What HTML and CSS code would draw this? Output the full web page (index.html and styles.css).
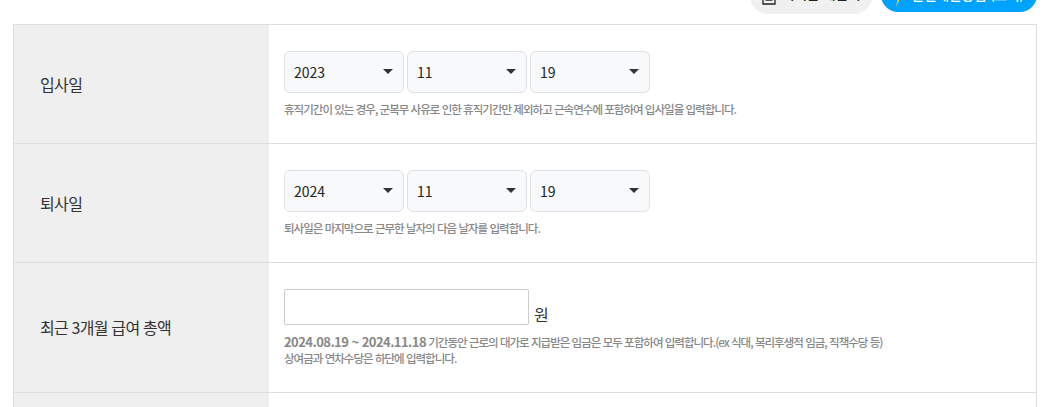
FILE: index.html
```html
<!DOCTYPE html>
<html lang="ko">
    <head>
        <meta charset="utf-8">
        <title>퇴직금 계산기</title>
        <link rel="stylesheet" href="styles.css">
    </head>
    <body>
        <div class="topbar">
            <button class="topbutton graybutton">
                <svg class="docicon" width="14" height="24" viewBox="0 0 14 24"><path d="M1 1H13V23H1Z M3.5 15H10.5 M3.5 19H10.5" fill="none" stroke="#222" stroke-width="1.3"/></svg>
                퇴직금 계산기
            </button>
            <button class="topbutton bluebutton">
                <svg class="bolticon" width="11" height="26" viewBox="0 0 12 30"><path d="M8 2L1 16H5L2 30L11 11H7Z" fill="#ffd400"/></svg>
                간편계산방법 (보기)
            </button>
        </div>

        <div class="formtable">
            <div class="row row-date">
                <div class="label">입사일</div>
                <div class="content">
                    <div class="selects">
                        <div class="selectwrap"><select><option>2023</option></select></div>
                        <div class="selectwrap"><select><option>11</option></select></div>
                        <div class="selectwrap"><select><option>19</option></select></div>
                    </div>
                    <p class="help">휴직기간이 있는 경우, 군복무 사유로 인한 휴직기간만 제외하고 근속연수에 포함하여 입사일을 입력합니다.</p>
                </div>
            </div>
            <div class="row row-date">
                <div class="label">퇴사일</div>
                <div class="content">
                    <div class="selects">
                        <div class="selectwrap"><select><option>2024</option></select></div>
                        <div class="selectwrap"><select><option>11</option></select></div>
                        <div class="selectwrap"><select><option>19</option></select></div>
                    </div>
                    <p class="help">퇴사일은 마지막으로 근무한 날자의 다음 날자를 입력합니다.</p>
                </div>
            </div>
            <div class="row row-pay">
                <div class="label">최근 3개월 급여 총액</div>
                <div class="content">
                    <div class="payline">
                        <input class="payinput" type="text">
                        <span class="won">원</span>
                    </div>
                    <p class="help help-pay"><b>2024.08.19 ~ 2024.11.18</b> 기간동안 근로의 대가로 지급받은 임금은 모두 포함하여 입력합니다.(ex 식대, 복리후생적 임금, 직책수당 등)<br>상여금과 연차수당은 하단에 입력합니다.</p>
                </div>
            </div>
            <div class="row row-next">
                <div class="label"></div>
                <div class="content"></div>
            </div>
        </div>
    </body>
</html>
```

FILE: styles.css
```css
html, body{
    height:407px;
    overflow:hidden;
}

body{
    margin:0;
    background-color:white;
    color:#333;
    font-family:"Noto Sans CJK KR", "Noto Sans", sans-serif;
}

.topbar{
    display:flex;
    justify-content:flex-end;
    align-items:flex-start;
    gap:9px;
    height:46px;
    margin-top:-22px;
    padding-right:24px;
}

.topbutton{
    display:flex;
    align-items:center;
    justify-content:center;
    border:none;
    border-radius:18px;
    font-family:inherit;
    font-size:14px;
    font-weight:500;
    letter-spacing:-0.4px;
}

.graybutton{
    width:122px;
    height:36px;
    gap:6px;
    padding:0 0 6px 0;
    background-color:#f0f0f0;
    color:#222;
}

.bluebutton{
    width:156px;
    height:34px;
    gap:6px;
    padding:0 0 2px 0;
    background-color:#00a2ff;
    color:white;
}

.formtable{
    margin:0 24px 0 13px;
    border:1px solid #ddd;
    border-bottom:none;
}

.row{
    display:flex;
    border-bottom:1px solid #ddd;
}

.row-date{
    height:118px;
}

.row-pay{
    height:129px;
}

.row-next{
    height:14px;
    border-bottom:none;
}

.label{
    width:255px;
    flex-shrink:0;
    display:flex;
    align-items:center;
    padding:0 0 1px 26px;
    box-sizing:border-box;
    background-color:#efefef;
    font-size:16px;
    letter-spacing:-0.65px;
    word-spacing:-0.4px;
}

.content{
    flex:1;
    padding:26px 15px 0 15px;
}

.row-next .content{
    padding:0;
}

.selects{
    display:flex;
    gap:3px;
}

.selectwrap{
    position:relative;
    width:120px;
    height:42px;
}

.selectwrap::after{
    content:"";
    position:absolute;
    top:18px;
    right:11px;
    border-left:5px solid transparent;
    border-right:5px solid transparent;
    border-top:5px solid #333;
}

.selectwrap select{
    appearance:none;
    width:100%;
    height:100%;
    padding:0 9px;
    background-color:#f8f9fa;
    border:1px solid #dee2e6;
    border-radius:6px;
    color:#212529;
    font-family:inherit;
    font-size:14px;
}

.help{
    margin:8px 0 0 0;
    color:#888;
    font-size:11.5px;
    font-weight:500;
    line-height:17px;
    letter-spacing:-0.98px;
}

.payline{
    display:flex;
    align-items:flex-end;
    gap:5px;
}

.payinput{
    width:245px;
    height:36px;
    box-sizing:border-box;
    background-color:white;
    border:1px solid #ccc;
    border-radius:2px;
}

.won{
    font-size:16px;
    line-height:22px;
    color:#333;
}

.help-pay{
    margin-top:9px;
    line-height:16px;
}

.help-pay b{
    font-size:13px;
    letter-spacing:-0.55px;
}
```
